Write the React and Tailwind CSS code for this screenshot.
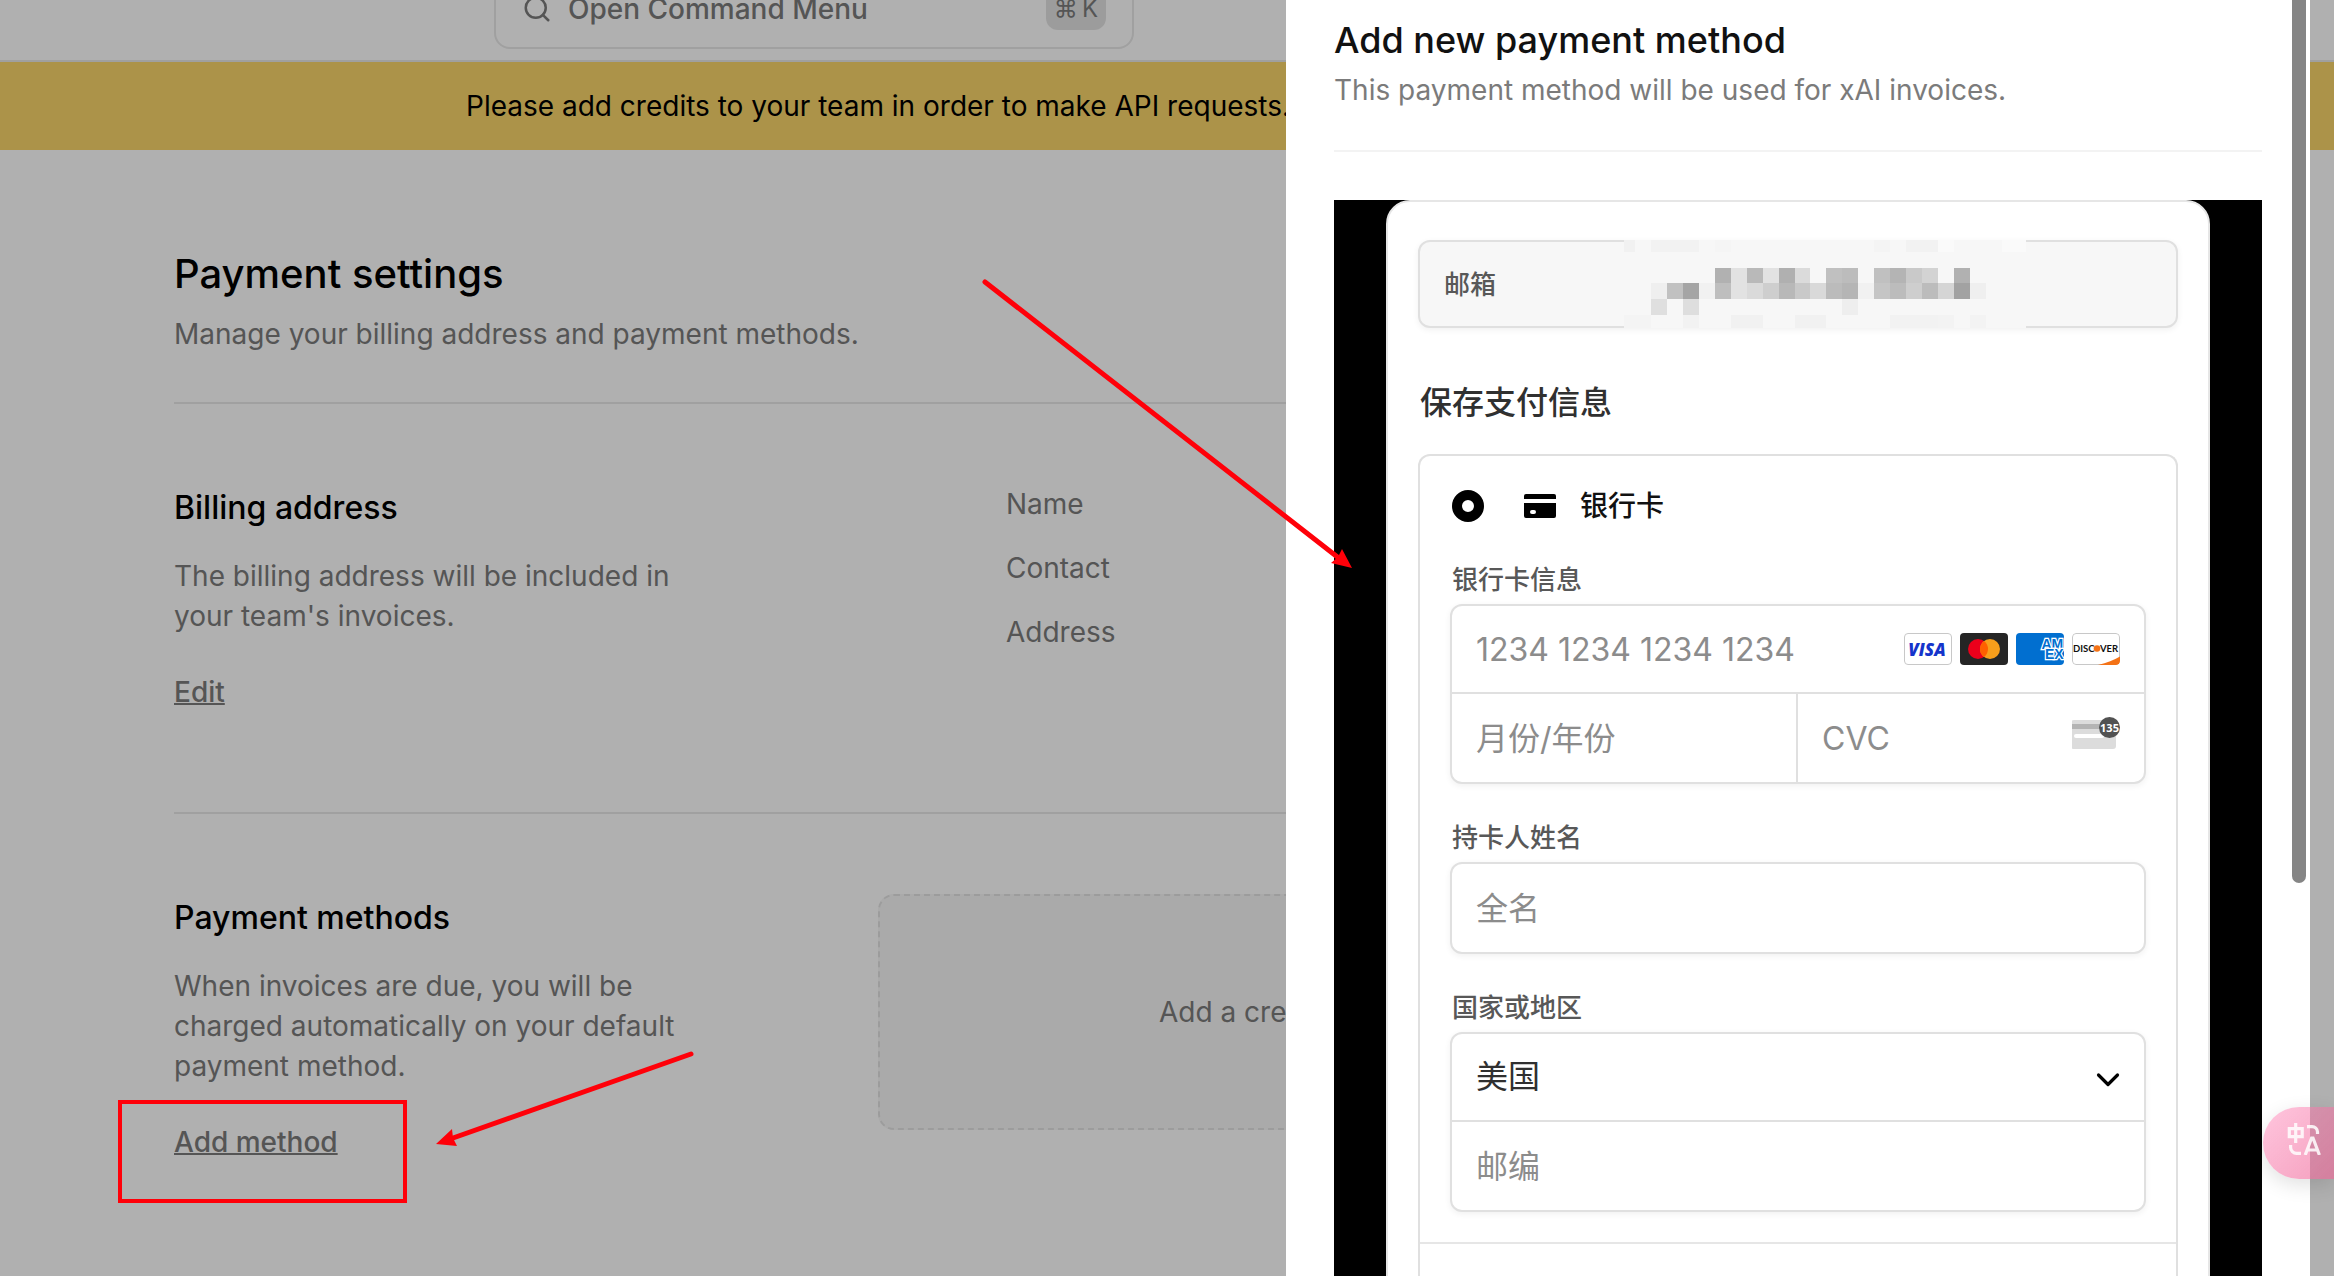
import React from "react";
import { Search } from "lucide-react";

const mosaic = [
  [0, 0, 11, 12, "#f1f1f1"], [27, 0, 48, 12, "#f2f2f2"], [91, 0, 16, 12, "#f5f5f5"],
  [250, 0, 16, 12, "#f4f4f4"], [282, 0, 32, 12, "#f2f2f2"], [314, 0, 16, 12, "#fafafa"], [378, 0, 24, 12, "#fafafa"],
  [91, 28, 16, 15, "#b1b1b1"], [107, 28, 16, 15, "#e2e2e2"], [123, 28, 16, 15, "#b9b9b9"], [139, 28, 16, 15, "#e2e2e2"],
  [155, 28, 16, 15, "#b0b0b0"], [171, 28, 15, 15, "#dbdbdb"], [202, 28, 16, 15, "#c0c0c0"], [218, 28, 16, 15, "#bcbcbc"],
  [250, 28, 16, 15, "#c0c0c0"], [266, 28, 16, 15, "#b4b4b4"], [282, 28, 16, 15, "#c9c9c9"], [298, 28, 16, 15, "#d3d3d3"], [330, 28, 16, 15, "#b1b1b1"],
  [27, 43, 16, 16, "#efefef"], [43, 43, 16, 16, "#c1c1c1"], [59, 43, 16, 16, "#a5a5a5"], [75, 43, 16, 16, "#f1f1f1"],
  [91, 43, 16, 16, "#bebebe"], [107, 43, 16, 16, "#e2e2e2"], [123, 43, 16, 16, "#dadada"], [139, 43, 16, 16, "#cecece"],
  [155, 43, 16, 16, "#b8b8b8"], [171, 43, 15, 16, "#c9c9c9"], [186, 43, 16, 16, "#d9d9d9"], [202, 43, 16, 16, "#bbbbbb"],
  [218, 43, 16, 16, "#b5b5b5"], [234, 43, 16, 16, "#f1f1f1"], [250, 43, 16, 16, "#c5c5c5"], [266, 43, 16, 16, "#bcbcbc"],
  [282, 43, 16, 16, "#cecece"], [298, 43, 16, 16, "#bcbcbc"], [314, 43, 16, 16, "#d5d5d5"], [330, 43, 16, 16, "#a2a2a2"], [346, 43, 16, 16, "#efefef"],
  [27, 59, 16, 16, "#dfdfdf"], [59, 59, 16, 16, "#dedede"], [218, 59, 16, 16, "#eeeeee"],
  [0, 75, 27, 13, "#f4f4f4"], [59, 75, 16, 13, "#f2f2f2"], [107, 75, 32, 13, "#f1f1f1"], [171, 75, 31, 13, "#f1f1f1"],
  [266, 75, 48, 13, "#f2f2f2"], [314, 75, 16, 13, "#f3f3f3"], [346, 75, 16, 13, "#f3f3f3"],
];

function CommandBar() {
  return (
    <header className="flex h-[62px] items-end overflow-hidden border-b-2 border-[#e8e8e8] pb-[11px] pl-[494px]">
      <button className="flex h-20 w-[640px] shrink-0 items-center rounded-2xl border-2 border-[#e8e8e8] px-[26px] text-[#7b7b7b]">
        <Search className="size-[30px]" strokeWidth={2} />
        <span className="ml-4 text-[28px] leading-10 font-medium">Open Command Menu</span>
        <kbd className="ml-auto flex h-[42px] items-center gap-1 rounded-xl bg-[#e3e3e3] px-2 font-[Inter,'DejaVu_Sans',sans-serif] text-2xl">
          <span>⌘</span>
          <span>K</span>
        </kbd>
      </button>
    </header>
  );
}

function BillingPage() {
  return (
    <div className="min-h-screen bg-white">
      <CommandBar />
      <div className="flex h-[88px] items-center bg-[#f9d66b] pl-[466px] text-[28px] leading-10 text-black">
        Please add credits to your team in order to make API requests.
      </div>
      <main className="px-[174px] pt-[98px] text-[28px] leading-10 text-[#7b7b7b]">
        <h1 className="text-[40px] leading-[52px] font-medium text-black">Payment settings</h1>
        <p className="mt-3.5">Manage your billing address and payment methods.</p>
        <section className="mt-12 grid h-[410px] grid-cols-[704px_1fr] border-t-2 border-[#e8e8e8] pt-20">
          <div>
            <h2 className="text-[32px] leading-[48px] font-medium text-black">Billing address</h2>
            <p className="mt-6 w-[520px]">The billing address will be included in your team's invoices.</p>
            <a href="#edit" className="mt-9 inline-block font-medium underline decoration-2">Edit</a>
          </div>
          <dl className="flex flex-col gap-6 pl-32">
            <dt>Name</dt>
            <dt>Contact</dt>
            <dt>Address</dt>
          </dl>
        </section>
        <section className="grid grid-cols-[704px_1fr] border-t-2 border-[#e8e8e8] pt-20">
          <div>
            <h2 className="text-[32px] leading-[48px] font-medium text-black">Payment methods</h2>
            <p className="mt-6 w-[520px]">When invoices are due, you will be charged automatically on your default payment method.</p>
            <a href="#add" className="mt-9 inline-block font-medium underline decoration-2">Add method</a>
          </div>
          <div className="flex h-[236px] items-center rounded-2xl border-2 border-dashed border-[#e3e3e3] bg-[#f6f6f6] pl-[279px]">
            Add a credit card
          </div>
        </section>
      </main>
    </div>
  );
}

function CardBrands() {
  return (
    <div className="flex gap-2">
      <svg className="h-8 w-12" viewBox="0 0 48 32" role="img" aria-label="Visa">
        <rect x="0.5" y="0.5" width="47" height="31" rx="3.5" fill="#fff" stroke="#c8c8c8" />
        <text x="23" y="22.5" textAnchor="middle" fontFamily="Open Sans" fontWeight="800" fontStyle="italic" fontSize="17" fill="#1434cb">VISA</text>
      </svg>
      <svg className="h-8 w-12" viewBox="0 0 48 32" role="img" aria-label="Mastercard">
        <rect width="48" height="32" rx="4" fill="#252525" />
        <circle cx="18" cy="16" r="10" fill="#eb001b" />
        <circle cx="30" cy="16" r="10" fill="#f79e1b" />
        <path d="M24 8a10 10 0 0 1 0 16a10 10 0 0 1 0-16Z" fill="#ff5f00" />
      </svg>
      <svg className="h-8 w-12 rounded" viewBox="0 0 48 32" role="img" aria-label="American Express">
        <rect width="48" height="32" fill="#016fd0" />
        <text fontFamily="Liberation Sans" fontWeight="700" fontSize="14" fill="#016fd0" stroke="#fff" strokeWidth="2.4" paintOrder="stroke">
          <tspan x="25.5" y="15.5">AM</tspan>
          <tspan x="29" y="26">EX</tspan>
        </text>
      </svg>
      <svg className="h-8 w-12 rounded" viewBox="0 0 48 32" role="img" aria-label="Discover">
        <rect x="0.5" y="0.5" width="47" height="31" rx="3.5" fill="#fff" stroke="#c8c8c8" />
        <path d="M26 32C35 30 42 27 48 23.5V28a4 4 0 0 1-4 4Z" fill="#f47216" />
        <g fontFamily="Lato" fontWeight="700" fontSize="9.5" fill="#111">
          <text x="1" y="19">DISC</text>
          <text x="28" y="19">VER</text>
        </g>
        <circle cx="25" cy="15.5" r="3.3" fill="#f47216" />
      </svg>
    </div>
  );
}

function CvcIcon() {
  return (
    <svg className="mb-2.5 h-8 w-12 shrink-0" viewBox="0 0 48 32" aria-hidden="true">
      <rect x="-1" y="3" width="45" height="29" rx="3" fill="#dcdcdc" />
      <rect x="-1" y="7" width="45" height="5" fill="#b4b4b4" />
      <rect x="2" y="17" width="30" height="4" rx="2" fill="#fff" />
      <circle cx="37.500" cy="10.500" r="10.500" fill="#525252" />
      <text x="37.500" y="14.500" textAnchor="middle" fontFamily="Open Sans" fontWeight="700" fontSize="11" fill="#fff">135</text>
    </svg>
  );
}

const field = "w-full min-w-0 bg-transparent px-6 text-[32px] outline-none text-[#303030] placeholder:text-[#8c8c8c] placeholder:opacity-100";
const group = "mt-1 rounded-xl border-2 border-[#e0e0e0] bg-white shadow-[0_2px_6px_rgba(0,0,0,0.06)]";
const label = "block text-[26px] leading-10 font-medium text-[#585858] mt-[34px] pl-0.5";

function CardForm() {
  return (
    <form className="mx-[52px] min-h-[1100px] rounded-3xl border-2 border-[#e6e6e6] bg-white px-[30px] pt-[38px]">
      <div className="relative flex h-[88px] items-center rounded-xl border-2 border-[#e0e0e0] bg-[#f7f7f7] shadow-[0_2px_6px_rgba(0,0,0,0.06)]">
        <label htmlFor="email" className="pl-6 text-[26px] font-medium text-[#585858]">邮箱</label>
        <input id="email" readOnly className="min-w-0 flex-1 bg-transparent pl-10 outline-none" />
        <svg className="absolute -top-0.5 left-[204px] h-[88px] w-[402px]" viewBox="0 0 402 88" shapeRendering="crispEdges" aria-hidden="true">
          <rect width="402" height="88" fill="#f7f7f7" />
          {mosaic.map(([x, y, w, h, c], i) => (
            <rect key={i} x={x} y={y} width={w} height={h} fill={c} />
          ))}
        </svg>
      </div>

      <h3 className="mt-[51px] pl-0.5 text-[32px] leading-[48px] font-medium text-[#303030]">保存支付信息</h3>

      <div className="mt-[27px] rounded-t-xl border-2 border-b-0 border-[#e0e0e0]">
        <div className="border-b-2 border-[#e6e6e6] px-[30px] py-[30px]">
          <label className="flex h-10 items-center text-[28px] font-medium text-[#111]">
            <input type="radio" name="method" defaultChecked className="ml-0.5 size-8 appearance-none rounded-full border-[10px] border-black bg-white" />
            <svg className="ml-10 h-6 w-8" viewBox="0 0 32 24" aria-hidden="true">
              <path d="M2 0h28a2 2 0 0 1 2 2v3H0V2a2 2 0 0 1 2-2Z" />
              <path fillRule="evenodd" d="M0 9h32v13a2 2 0 0 1-2 2H2a2 2 0 0 1-2-2ZM8 16a2 2 0 0 0 0 4h2a2 2 0 0 0 0-4Z" />
            </svg>
            <span className="ml-6">银行卡</span>
          </label>

          <label htmlFor="number" className={label}>银行卡信息</label>
          <div className={group}>
            <div className="flex h-[88px] items-center border-b-2 border-[#e0e0e0] pr-6">
              <input id="number" placeholder="1234 1234 1234 1234" className={field + " h-full"} />
              <CardBrands />
            </div>
            <div className="grid h-[88px] grid-cols-2">
              <div className="flex border-r-2 border-[#e0e0e0]">
                <input aria-label="月份/年份" placeholder="月份/年份" className={field + " h-full"} />
              </div>
              <div className="flex items-center pr-6">
                <input aria-label="CVC" placeholder="CVC" className={field + " h-full"} />
                <CvcIcon />
              </div>
            </div>
          </div>

          <label htmlFor="holder" className={label}>持卡人姓名</label>
          <div className={group}>
            <input id="holder" placeholder="全名" className={field + " block h-[88px]"} />
          </div>

          <label htmlFor="country" className={label}>国家或地区</label>
          <div className={group}>
            <div className="relative h-[88px] border-b-2 border-[#e0e0e0]">
              <select id="country" className={field + " h-full appearance-none"}>
                <option>美国</option>
              </select>
              <svg className="pointer-events-none absolute top-[38px] right-6 h-4 w-6" viewBox="0 0 24 16" fill="none" stroke="#000" strokeWidth="3.200" strokeLinecap="round" strokeLinejoin="round" aria-hidden="true">
                <path d="M2.500 3l9.500 9.500L21.500 3" />
              </svg>
            </div>
            <input aria-label="邮编" placeholder="邮编" className={field + " block h-[88px]"} />
          </div>
        </div>
        <div className="h-40" />
      </div>
    </form>
  );
}

function PaymentDialog() {
  return (
    <div role="dialog" aria-labelledby="dialog-title" className="fixed inset-y-0 right-6 w-[1024px] max-w-full overflow-hidden bg-white px-12 pt-4">
      <h2 id="dialog-title" className="text-[36px] leading-[48px] font-medium text-[#111]">Add new payment method</h2>
      <p className="mt-1.5 text-[28px] leading-10 text-[#7b7b7b]">This payment method will be used for xAI invoices.</p>
      <div className="mt-10 border-t-2 border-[#f3f3f3] pt-12">
        <div className="bg-black">
          <CardForm />
        </div>
      </div>
      <div className="absolute top-0 right-1 h-[883px] w-3.5 rounded-b-full bg-[#858585]" />
    </div>
  );
}

function Annotations() {
  return (
    <div className="pointer-events-none absolute inset-0">
      <div className="absolute top-[1100px] left-[118px] h-[103px] w-[289px] border-4 border-[#ff0009]" />
      <svg className="absolute top-0 left-0 h-[1276px] w-[1400px]" viewBox="0 0 1400 1276" stroke="#ff0009" fill="#ff0009" aria-hidden="true">
        <path d="M985 282L1340 559" strokeWidth="5" strokeLinecap="round" />
        <path d="M1352 568L1342 549L1338 557L1331 563Z" stroke="none" />
        <path d="M691 1054L453 1138" strokeWidth="5" strokeLinecap="round" />
        <path d="M436 1144L452 1129L453 1138L457 1146Z" stroke="none" />
      </svg>
    </div>
  );
}

function TranslateButton() {
  return (
    <button aria-label="翻译" className="fixed top-[1107px] right-0 flex h-[72px] w-[71px] items-start rounded-l-full bg-linear-to-br from-[#ff7fb5]/45 to-[#ee5f93]/60 pt-4 pl-6 shadow-[0_6px_20px_rgba(0,0,0,0.12)]">
      <svg className="h-8 w-[34px]" viewBox="0 0 34 32" fill="none" stroke="#fff" strokeOpacity="0.85" strokeWidth="3.200" aria-hidden="true">
        <path d="M2.300 5.600H15.200V13.700H2.300ZM8.700 0V20M20 3.600H25A5.500 5.500 0 0 1 30.500 9V11M3.600 22V24.500A6 6 0 0 0 9.600 30.400H14" />
        <path d="M18.200 32L24.600 15H26L32.400 32M20.500 27H30" />
      </svg>
    </button>
  );
}

export default function App() {
  return (
    <div className="relative h-screen overflow-hidden font-[Inter,'Noto_Sans_CJK_SC',sans-serif]">
      <BillingPage />
      <div className="fixed inset-0 bg-black/31" />
      <PaymentDialog />
      <Annotations />
      <TranslateButton />
    </div>
  );
}
